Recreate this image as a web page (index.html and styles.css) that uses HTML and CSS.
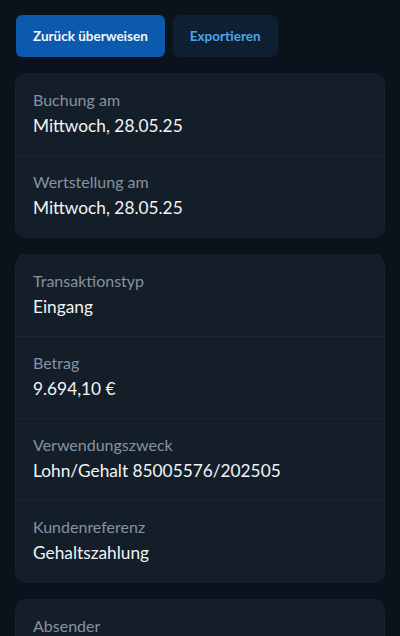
FILE: index.html
```html
<!DOCTYPE html>
<html lang="de">
<head>
<meta charset="utf-8">
<link rel="stylesheet" href="styles.css">
</head>
<body>
<div class="page">
  <div class="actions">
    <button class="btn btn-primary">Zurück überweisen</button>
    <button class="btn btn-secondary">Exportieren</button>
  </div>
  <div class="card">
    <div class="row"><div class="label">Buchung am</div><div class="value">Mittwoch, 28.05.25</div></div>
    <div class="row"><div class="label">Wertstellung am</div><div class="value">Mittwoch, 28.05.25</div></div>
  </div>
  <div class="card">
    <div class="row"><div class="label">Transaktionstyp</div><div class="value">Eingang</div></div>
    <div class="row"><div class="label">Betrag</div><div class="value">9.694,10 €</div></div>
    <div class="row"><div class="label">Verwendungszweck</div><div class="value">Lohn/Gehalt 85005576/202505</div></div>
    <div class="row"><div class="label">Kundenreferenz</div><div class="value">Gehaltszahlung</div></div>
  </div>
  <div class="card">
    <div class="row"><div class="label">Absender</div><div class="value">&nbsp;</div></div>
  </div>
</div>
</body>
</html>
```
FILE: styles.css
```css
html, body {
  margin: 0;
  padding: 0;
  background: #0a121b;
  height: 100%;
  overflow: hidden;
}
.page {
  padding: 15px 16px 0 16px;
  display: flex;
  flex-direction: column;
  gap: 18px;
  font-family: Lato, "Noto Sans", sans-serif;
}
.actions {
  display: flex;
  gap: 8px;
  margin-bottom: -1px;
}
.btn {
  height: 42px;
  border: none;
  border-radius: 6px;
  font-family: Lato, sans-serif;
  font-size: 13.5px;
  font-weight: 700;
  padding: 0 17px;
}
.btn-primary {
  background: #0c5aae;
  color: #f2f6fb;
}
.btn-secondary {
  background: #0e1f31;
  color: #4fa3e6;
}
.card {
  background: #141e28;
  box-shadow: 0 0 0 1px #17212b;
  border-radius: 10px;
  overflow: hidden;
}
.row {
  padding: 16px 17px 17px 17px;
  height: 48px;
  display: flex;
  flex-direction: column;
  gap: 4px;
}
.row + .row {
  border-top: 1px solid #1b2631;
}
.label {
  color: #8593a0;
  font-size: 16px;
  line-height: 20px;
}
.value {
  color: #f1f4f6;
  font-size: 17.3px;
  line-height: 24px;
}
```
